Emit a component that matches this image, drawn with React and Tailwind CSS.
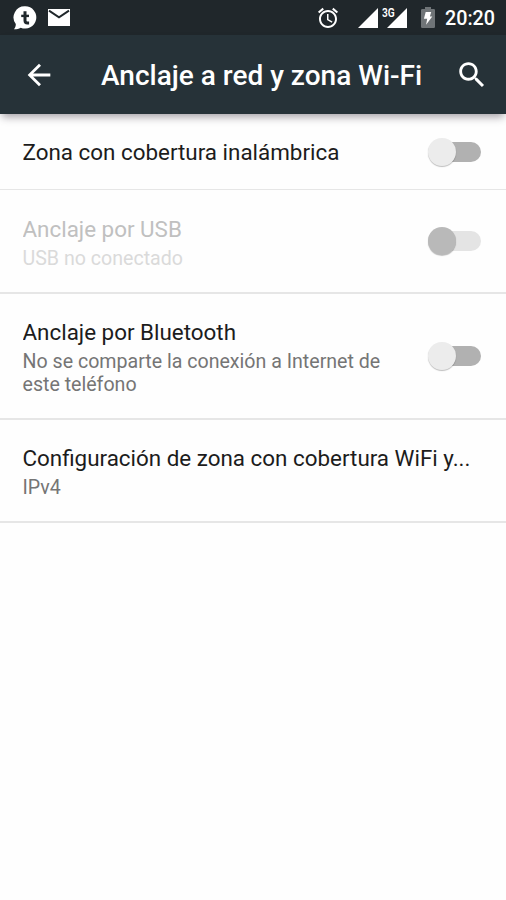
function ChatIcon() {
  return (
    <svg className="h-6 w-6" viewBox="0 0 24 24">
      <path fill="#fff" d="M12.300 0.200a11.200 11.200 0 1 1-4.600 21.500C5.600 22.900 3 23.500 0.900 23.300c1.200-1.200 1.900-2.800 1.900-5.200A11.200 11.200 0 0 1 12.300 0.200z" />
      <path fill="none" stroke="#20272b" strokeWidth="3" d="M12 5.200v9.300q0 2.500 2.400 2.500h1.700" />
      <path fill="none" stroke="#20272b" strokeWidth="2.400" d="M8.200 9.900h7.800" />
    </svg>
  );
}

function MailIcon() {
  return (
    <svg className="h-[17px] w-[22px]" viewBox="0 0 22 17">
      <path fill="#fff" d="M0 0h22v17H0z" />
      <path fill="none" stroke="#20272b" strokeWidth="1.900" d="M1 1.600l10 6.700 10-6.700" />
    </svg>
  );
}

function AlarmIcon() {
  return (
    <svg className="h-6 w-6" viewBox="0 0 24 24" fill="#fff">
      <path d="M22 5.720l-4.600-3.860-1.290 1.530 4.600 3.860L22 5.720zM7.880 3.390L6.600 1.860 2 5.710l1.290 1.530 4.590-3.850zM12.500 8H11v6l4.750 2.850.75-1.230-4-2.370V8zM12 4c-4.970 0-9 4.030-9 9s4.020 9 9 9c4.970 0 9-4.030 9-9s-4.030-9-9-9zm0 16c-3.870 0-7-3.130-7-7s3.130-7 7-7 7 3.130 7 7-3.130 7-7 7z" />
    </svg>
  );
}

function SignalIcon() {
  return (
    <svg className="h-5 w-5" viewBox="0 0 20 20">
      <path fill="#fff" d="M20 0v20H0z" />
    </svg>
  );
}

function BatteryIcon() {
  return (
    <svg className="h-[21px] w-[14px]" viewBox="0 0 14 21">
      <path fill="#6f7477" d="M4 0h6v2h2.800q1.200 0 1.200 1.200v16.600q0 1.200-1.200 1.200H1.200Q0 21 0 19.800V3.200Q0 2 1.200 2H4z" />
      <path fill="#fff" d="M4.700 5h5.500L8.900 9.500h2.400L5.100 17.800l1.100-6.100H2.900z" />
    </svg>
  );
}

function StatusBar() {
  return (
    <div className="flex h-[35px] items-center justify-between bg-[#20272b] pr-[11px] pl-[13px] text-white">
      <div className="flex items-center gap-[11px]">
        <ChatIcon />
        <MailIcon />
      </div>
      <div className="flex items-center">
        <AlarmIcon />
        <div className="ml-[18px] flex pt-px">
          <SignalIcon />
          <div className="relative ml-[9px]">
            <SignalIcon />
            <span className="absolute -top-px -left-[5px] origin-left scale-x-[0.85] text-[12px] leading-none font-semibold">3G</span>
          </div>
        </div>
        <div className="ml-[14px]">
          <BatteryIcon />
        </div>
        <span className="ml-[10px] pt-[2px] text-[19.700px] leading-none font-medium">20:20</span>
      </div>
    </div>
  );
}

function AppBar() {
  return (
    <header className="relative flex h-[79px] items-center bg-[#263238] pr-[17px] pl-[22px] text-white shadow-[0_5px_8px_-2px_rgba(40,30,45,0.42)]">
      <svg className="h-[34px] w-[34px]" viewBox="0 0 24 24" fill="#fff">
        <path d="M20 11H7.830l5.590-5.590L12 4l-8 8 8 8 1.410-1.410L7.830 13H20v-2z" />
      </svg>
      <h1 className="ml-[45px] flex-1 whitespace-nowrap pt-[2px] text-[28px] leading-8 font-medium">Anclaje a red y zona Wi-Fi</h1>
      <svg className="h-[34px] w-[34px]" viewBox="0 0 24 24" fill="#fff">
        <path d="M15.500 14h-.79l-.28-.27C15.410 12.590 16 11.110 16 9.500 16 5.910 13.090 3 9.500 3S3 5.910 3 9.500 5.910 16 9.500 16c1.610 0 3.090-.59 4.230-1.570l.27.28v.79l5 4.990L20.490 19l-4.990-5zm-6 0C7.010 14 5 11.990 5 9.500S7.010 5 9.500 5 14 7.010 14 9.500 11.990 14 9.500 14z" />
      </svg>
    </header>
  );
}

function Toggle({ disabled }) {
  return (
    <div className={`flex h-5 w-[47px] shrink-0 items-center rounded-full ${disabled ? "bg-[#e4e4e4]" : "bg-[#b1b1b1]"}`}>
      <div className={`-ml-[6px] h-7 w-7 rounded-full shadow-[0_1px_1px_rgba(0,0,0,0.25)] ${disabled ? "bg-[#b9b9b9]" : "bg-[#ececec]"}`} />
    </div>
  );
}

function Row({ title, summary, toggle, disabled, height }) {
  return (
    <div className={`flex items-center border-[#e6e6e6] pr-[25px] pl-[22.500px] ${height}`}>
      <div className="min-w-0 flex-1">
        <div className={`truncate text-[22.400px] leading-[29px] ${summary ? "pt-[2px]" : "pt-px"} ${disabled ? "text-[#c0c0c0]" : "text-[#1c1c1c]"}`}>{title}</div>
        {summary && (
          <div className={`w-[370px] pt-[3px] text-[19.600px] leading-[23px] ${disabled ? "text-[#dadada]" : "text-[#757575]"}`}>{summary}</div>
        )}
      </div>
      {toggle && <Toggle disabled={disabled} />}
    </div>
  );
}

export default function App() {
  return (
    <div className="min-h-[900px] w-[506px] overflow-hidden bg-[#fefefe] font-['Roboto',sans-serif]">
      <StatusBar />
      <AppBar />
      <main>
        <Row title="Zona con cobertura inalámbrica" toggle height="h-[76px] border-b" />
        <Row title="Anclaje por USB" summary="USB no conectado" toggle disabled height="h-[104px] border-b-2" />
        <Row title="Anclaje por Bluetooth" summary="No se comparte la conexión a Internet de este teléfono" toggle height="h-[126px] border-b-2" />
        <Row title="Configuración de zona con cobertura WiFi y..." summary="IPv4" height="h-[103px] border-b-2" />
      </main>
    </div>
  );
}
